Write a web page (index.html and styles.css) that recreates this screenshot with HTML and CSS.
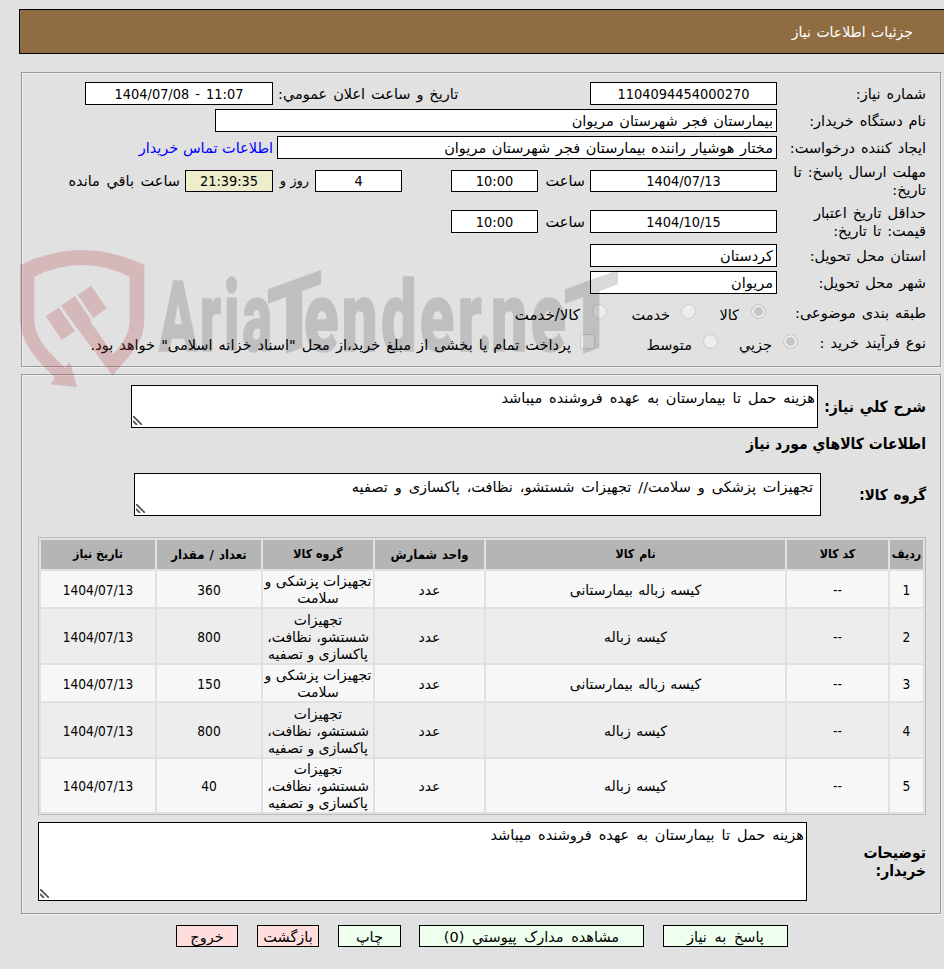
FILE: index.html
```
<!DOCTYPE html>
<html lang="fa" dir="rtl">
<head>
<meta charset="utf-8">
<title>جزئیات اطلاعات نیاز</title>
<link rel="stylesheet" href="styles.css">
</head>
<body>
<header class="bar">جزئیات اطلاعات نیاز</header>

<section class="panel info">
  <div class="row"><span class="label">شماره نیاز:</span><span class="field main num">1104094454000270</span><span class="mid-label">تاریخ و ساعت اعلان عمومي:</span><span class="field announce num" dir="ltr">1404/07/08 - 11:07</span></div>
  <div class="row"><span class="label">نام دستگاه خریدار:</span><span class="field buyer">بیمارستان فجر شهرستان مریوان</span></div>
  <div class="row"><span class="label">ایجاد کننده درخواست:</span><span class="field creator">مختار هوشیار راننده بیمارستان فجر شهرستان مریوان</span><a class="contact">اطلاعات تماس خریدار</a></div>
  <div class="row tall"><span class="label">مهلت ارسال پاسخ: تا<br>تاریخ:</span><span class="field main num">1404/07/13</span><span class="hour">ساعت</span><span class="field time num">10:00</span><span class="field days num">4</span><span class="and">روز و</span><span class="field left num">21:39:35</span><span class="remain">ساعت باقي مانده</span></div>
  <div class="row tall second"><span class="label">حداقل تاریخ اعتبار<br>قیمت: تا تاریخ:</span><span class="field main num">1404/10/15</span><span class="hour">ساعت</span><span class="field time num">10:00</span></div>
  <div class="row"><span class="label">استان محل تحویل:</span><span class="field main">کردستان</span></div>
  <div class="row"><span class="label">شهر محل تحویل:</span><span class="field main">مریوان</span></div>
  <div class="row opts"><span class="label">طبقه بندی موضوعی:</span><i class="radio on"></i><span class="o1">کالا</span><i class="radio"></i><span class="o2">خدمت</span><i class="radio"></i><span class="o3">کالا/خدمت</span></div>
  <div class="row opts kind"><span class="label">نوع فرآیند خرید :</span><i class="radio on"></i><span class="o4">جزيي</span><i class="radio"></i><span class="o5">متوسط</span><i class="check"></i><span class="o6">پرداخت تمام یا بخشی از مبلغ خرید،از محل "اسناد خزانه اسلامی" خواهد بود.</span></div>
</section>

<section class="panel goods">
  <div class="area-row first"><b class="blabel">شرح کلي نیاز:</b><div class="area">هزینه حمل تا بیمارستان به عهده فروشنده میباشد<svg class="grip" viewBox="0 0 9 9"><path d="M0 0L9 9M0 5L4 9"/></svg></div></div>
  <h2>اطلاعات کالاهاي مورد نیاز</h2>
  <div class="area-row group"><b class="blabel">گروه کالا:</b><div class="area">تجهیزات پزشکی و سلامت// تجهیزات شستشو، نظافت، پاکسازی و تصفیه<svg class="grip" viewBox="0 0 9 9"><path d="M0 0L9 9M0 5L4 9"/></svg></div></div>
  <div class="grid">
    <b>ردیف</b><b>کد کالا</b><b>نام کالا</b><b>واحد شمارش</b><b>گروه کالا</b><b>تعداد / مقدار</b><b>تاریخ نیاز</b>
    <span>1</span><span>--</span><span>کیسه زباله بیمارستانی</span><span>عدد</span><span>تجهیزات پزشکی و<br>سلامت</span><span>360</span><span>1404/07/13</span>
    <span class="alt">2</span><span class="alt">--</span><span class="alt">کیسه زباله</span><span class="alt">عدد</span><span class="alt">تجهیزات<br>شستشو، نظافت،<br>پاکسازی و تصفیه</span><span class="alt">800</span><span class="alt">1404/07/13</span>
    <span>3</span><span>--</span><span>کیسه زباله بیمارستانی</span><span>عدد</span><span>تجهیزات پزشکی و<br>سلامت</span><span>150</span><span>1404/07/13</span>
    <span class="alt">4</span><span class="alt">--</span><span class="alt">کیسه زباله</span><span class="alt">عدد</span><span class="alt">تجهیزات<br>شستشو، نظافت،<br>پاکسازی و تصفیه</span><span class="alt">800</span><span class="alt">1404/07/13</span>
    <span>5</span><span>--</span><span>کیسه زباله</span><span>عدد</span><span>تجهیزات<br>شستشو، نظافت،<br>پاکسازی و تصفیه</span><span>40</span><span>1404/07/13</span>
  </div>
  <div class="area-row notes"><b class="blabel">توضیحات<br>خریدار:</b><div class="area">هزینه حمل تا بیمارستان به عهده فروشنده میباشد<svg class="grip" viewBox="0 0 9 9"><path d="M0 0L9 9M0 5L4 9"/></svg></div></div>
</section>

<footer class="actions">
  <span class="btn b1">پاسخ به نیاز</span><span class="btn b2">مشاهده مدارک پیوستي (0)</span><span class="btn b3">چاپ</span><span class="btn red">بازگشت</span><span class="btn red">خروج</span>
</footer>

<svg class="mark" viewBox="0 0 630 150">
  <g class="shield">
    <path d="M20 25Q82 -5 144.300 25V78C144.300 104 132 112 112.700 135.700L77.700 89L61 65.700L75 56L91 80L90.500 82L113.300 114.300C125 100 129.700 94 129.700 78V36.700Q82 13.500 34.300 36.700V78C34.300 98 46 109 65 127.700L70 121.700L77 147L50.700 144.300L55 137.700C36 119 20 103 20 78Z"/>
    <path d="M45.700 76L59 67.700L74.700 91L61.700 100ZM77.700 55L91 45.700L106.700 68.300L93.300 78Z"/>
    <path class="cut" d="M60 67L76 91M76 55.500L92 79"/>
  </g>
  <g class="word">
    <text x="159" y="111" textLength="116" lengthAdjust="spacingAndGlyphs">Aria</text>
    <text class="tee" transform="translate(267 120) skewY(-20)" textLength="55" lengthAdjust="spacingAndGlyphs">T</text>
    <text x="304" y="111" textLength="181" lengthAdjust="spacingAndGlyphs">ender</text>
    <text x="478" y="111" textLength="16" lengthAdjust="spacingAndGlyphs">.</text>
    <text x="491" y="111" textLength="78" lengthAdjust="spacingAndGlyphs">ne</text>
    <text class="tee" transform="translate(564 120) skewY(-20)" textLength="55" lengthAdjust="spacingAndGlyphs">T</text>
  </g>
</svg>
</body>
</html>
```
FILE: styles.css
```
* { box-sizing: border-box; }
html { overflow: hidden; }
body {
  position: relative;
  margin: 0;
  width: 944px;
  height: 969px;
  background: #e1e1e1;
  color: #000;
  font: 14.5px/18px "DejaVu Sans", sans-serif;
  word-spacing: 1.3px;
  overflow: hidden;
}
body::before { content: ""; display: table; }
.bar {
  margin: 9px 0 18px;
  width: 925px;
  height: 45px;
  padding: 1px 31px 0 0;
  line-height: 43px;
  border: 1px solid #000;
  border-right: 0;
  background: #906d40;
  color: #fff;
  font-size: 14px;
  word-spacing: 1px;
}
.panel {
  margin-right: 3px;
  width: 920px;
  border: 1px solid #9a9a9a;
  box-shadow: 1px 1px 0 #f0f0f0, inset 1px 1px 0 #f0f0f0;
  padding-right: 14px;
  white-space: nowrap;
}
.info { height: 295px; padding-top: 7px; }
.row { display: flex; align-items: center; height: 27px; }
.tall { height: 40px; }
.second { height: 41px; }
.label { width: 149px; flex: none; }
.field {
  flex: none;
  height: 23px;
  line-height: 22px;
  border: 1px solid #000;
  background: #fff;
  padding: 0 3px;
}
.num { text-align: center; font-family: "DejaVu Sans Condensed", "DejaVu Sans", sans-serif; font-size: 14.4px; }
.main { width: 187px; }
.mid-label { width: 317px; padding-left: 5px; text-align: left; }
.announce { width: 188px; word-spacing: 2px; }
.buyer { width: 562px; word-spacing: 1px; }
.creator { width: 500px; word-spacing: 1px; }
.contact { color: #00f; margin-right: 4px; word-spacing: 0; }
.tall .field { height: 22px; line-height: 21px; }
.second .field { height: 23px; line-height: 22px; }
.hour { width: 52px; padding-right: 5px; }
.time { width: 87px; }
.days { width: 87px; margin-right: 49px; }
.and { width: 42px; padding-right: 6px; font-size: 13px; word-spacing: 0; }
.left { width: 88px; background: #eeeecc; }
.remain { margin-right: 5px; word-spacing: 2px; }
.opts { height: 34px; }
.kind { height: 26px; }
.opts span:not(.label) { flex: none; margin-top: 3px; }
.radio, .check { width: 15px; height: 15px; border: 1px solid #cacaca; border-radius: 50%; background: #ededed; flex: none; margin-top: -3px; }
.radio.on { background: #c6c6c6; box-shadow: inset 0 0 0 2px #ededed; }
.check { border-radius: 2px; margin-right: 51px; }
.opts .on { margin-right: 11px; }
.kind .on { margin-right: -21px; }
.o1 { width: 55px; padding-right: 12px; }
.o2 { width: 74px; padding-right: 11px; }
.o3 { padding-right: 12px; font-size: 15px; }
.o4 { width: 65px; padding-right: 11px; }
.o5 { width: 57px; padding-right: 11px; }
.o6 { padding-right: 9px; word-spacing: 1.5px; }
.goods { margin-top: 7px; height: 540px; padding-top: 10px; }
.area-row { display: flex; align-items: center; }
.area { position: relative; border: 1px solid #000; background: #fff; width: 687px; height: 43px; padding: 3px 2px; word-spacing: 2.3px; }
.blabel, h2 { font-family: "DejaVu Sans Condensed", "DejaVu Sans", sans-serif; font-size: 15.5px; word-spacing: 1px; }
.blabel { width: 108px; flex: none; }
.grip { position: absolute; left: 1px; bottom: 2px; width: 9px; height: 9px; fill: none; stroke: #555; stroke-width: 1.8; }
h2 { margin: 6px 0 0; line-height: 20px; word-spacing: 0; }
.group { margin-top: 19px; }
.group .blabel { width: 105px; font-size: 15px; }
.group .area { padding: 4px 7px; }
.grid {
  display: grid;
  grid-template-columns: 33px 101px 299px 109px 110px 104px 114px;
  grid-template-rows: 29px 36px 54px 36px 54px 53px;
  gap: 2px;
  width: 888px;
  margin-top: 21px;
  padding: 2px;
  border: 1px solid #bbb;
  font-size: 14px;
  line-height: 17px;
  text-align: center;
  word-spacing: 0;
}
.grid > * { display: grid; place-items: center; align-content: center; background: #f7f7f7; padding-top: 2px; }
.grid > :nth-child(7n+1), .grid > :nth-child(7n+2), .grid > :nth-child(7n+6), .grid > :nth-child(7n) {
  font-family: "DejaVu Sans Condensed", "DejaVu Sans", sans-serif;
  font-size: 13.6px;
}
.grid > :nth-child(7n+3) { word-spacing: 1px; }
.grid > b:nth-child(n) { padding-top: 0; background: #b5b5b5; font-family: "DejaVu Sans Condensed", "DejaVu Sans", sans-serif; font-size: 12.3px; }
.grid > b:nth-child(4), .grid > b:nth-child(6) { font-size: 13px; word-spacing: 1px; }
.grid > .alt { background: #ededed; }
.notes { margin-top: 7px; }
.notes .blabel { width: 119px; }
.notes .area { width: 769px; height: 79px; }
.actions { display: flex; gap: 19px; margin: 11px 156px 0 0; word-spacing: 3px; }
.btn { height: 22px; border: 1px solid #000; background: #efe; text-align: center; line-height: 22px; width: 62px; white-space: nowrap; }
.b1 { width: 125px; }
.b2 { width: 225px; }
.b3 { width: 63px; margin-right: -1px; }
.red { background: #fdd; }
.mark { position: absolute; left: 0; top: 240px; width: 630px; height: 150px; overflow: visible; pointer-events: none; direction: ltr; }
.shield { fill: #af2b2f; opacity: .22; }
.cut { stroke: #e1e1e1; stroke-width: 1; }
.word { fill: #000; stroke: #000; stroke-width: 1.5; stroke-linejoin: round; opacity: .145; font: 900 98px Roboto, sans-serif; letter-spacing: 5px; word-spacing: 0; }
.tee { letter-spacing: 0; }
```
